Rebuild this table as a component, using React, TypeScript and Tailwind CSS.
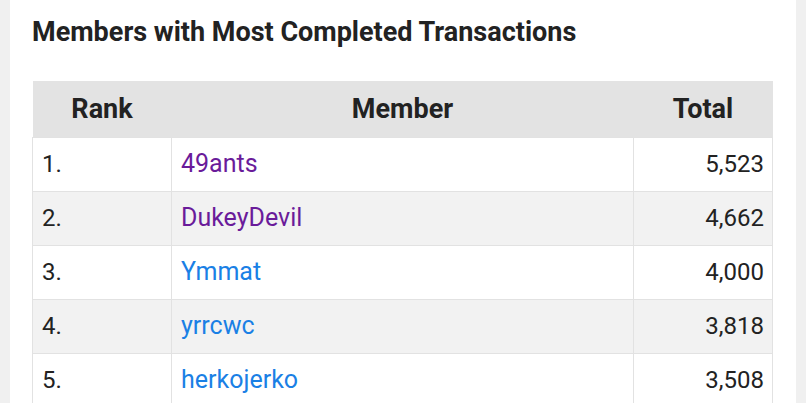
import React from "react";

const rows = [
  { rank: "1.", name: "49ants", total: "5,523", visited: true },
  { rank: "2.", name: "DukeyDevil", total: "4,662", visited: true },
  { rank: "3.", name: "Ymmat", total: "4,000", visited: false },
  { rank: "4.", name: "yrrcwc", total: "3,818", visited: false },
  { rank: "5.", name: "herkojerko", total: "3,508", visited: false },
];

export default function App() {
  return (
    <div
      className="w-[806px] h-[403px] overflow-hidden bg-[#f0f0f0] px-[10px] flex"
      style={{ fontFamily: "Roboto, 'Liberation Sans', sans-serif" }}
    >
      <div className="w-[786px] bg-white pl-[22px] pr-[22px] pt-[15px]">
        <h2 className="text-[27px] leading-[34px] font-bold text-[#222]">
          Members with Most Completed Transactions
        </h2>
        <table className="mt-[32px] w-[741px] border-collapse text-[24px] text-[#222]">
          <thead>
            <tr className="bg-[#e3e3e3]">
              <th className="w-[139px] h-[56px] text-[27px] font-bold text-center">Rank</th>
              <th className="text-[27px] font-bold text-center">Member</th>
              <th className="w-[139px] text-[27px] font-bold text-center">Total</th>
            </tr>
          </thead>
          <tbody>
            {rows.map((r, i) => (
              <tr key={r.rank} className={i % 2 === 1 ? "bg-[#f2f2f2]" : "bg-white"}>
                <td className="h-[54px] border border-[#e2e2e2] px-[9px] text-left">{r.rank}</td>
                <td className="border border-[#e2e2e2] px-[9px] text-left text-[25px]">
                  <a className={r.visited ? "text-[#6a1b9a]" : "text-[#1a80e5]"}>{r.name}</a>
                </td>
                <td className="border border-[#e2e2e2] px-[8px] text-right">{r.total}</td>
              </tr>
            ))}
          </tbody>
        </table>
      </div>
    </div>
  );
}
